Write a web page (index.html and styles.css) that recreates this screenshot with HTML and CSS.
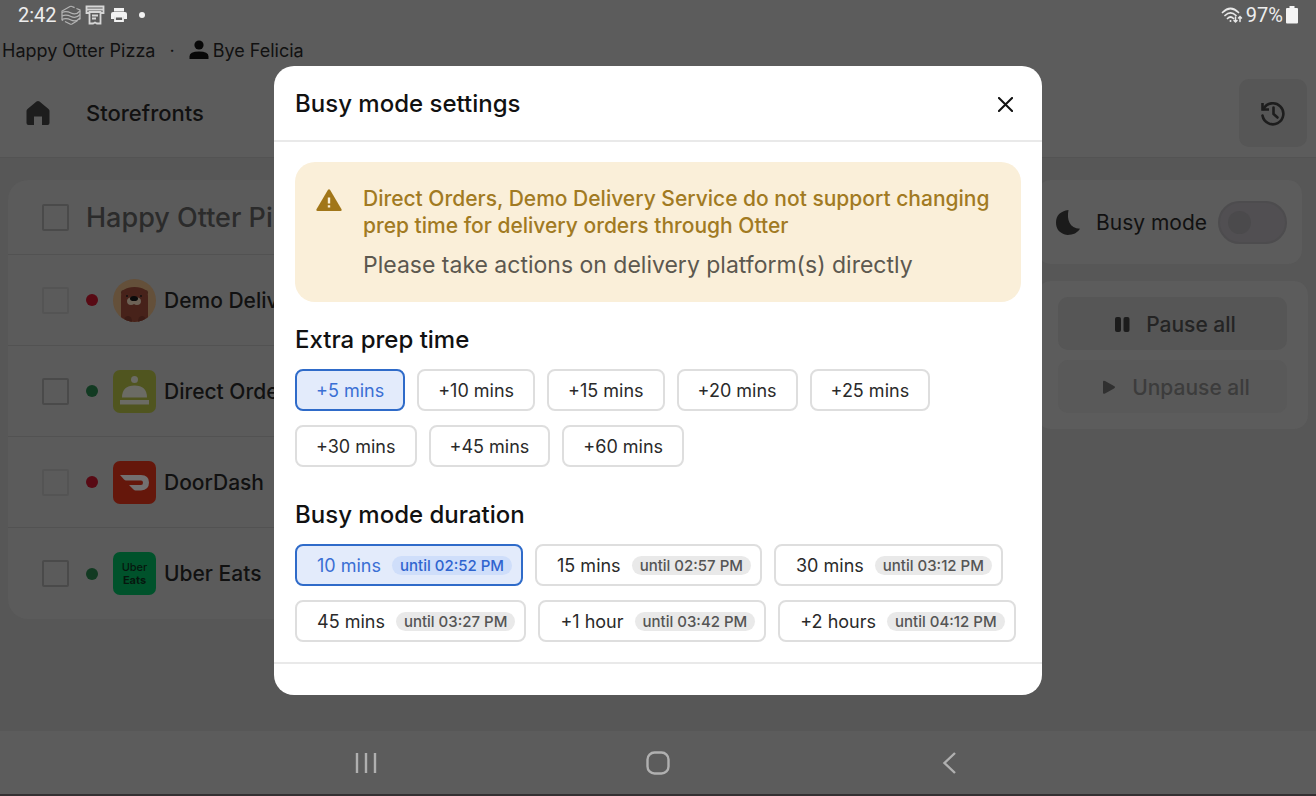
FILE: index.html
```html
<!DOCTYPE html>
<html lang="en">
<head>
<meta charset="utf-8">
<meta name="viewport" content="width=device-width, initial-scale=1">
<title>Storefronts</title>
<link rel="stylesheet" href="styles.css">
</head>
<body>
<div class="device">
  <div class="status-bar">
    <div class="status-group">
      <span class="clock">2:42</span>
      <svg class="status-icon" viewBox="0 0 20 20" fill="none" stroke="#b4b4b4" stroke-width="1.2"><path d="M1 6 9 1.500q1-.5 2 0L19 5v9l-8 5q-1 .5-2 0L1 15z" stroke-dasharray="14 2"/><path d="M1 7.500q4-2 9 .5t9-2M1 11q4-2 9 .5t9-2M1 14.500q4-2 9 .5t9-2"/></svg>
      <svg class="status-icon" viewBox="0 0 20 20" fill="none" stroke="#d6d6d6" stroke-width="1.800"><path d="M4 8H1.500V1.500h17V8H16M1.500 4.500h17"/><path d="M4.500 7h11v11.500H12l-2-1-2 1H4.500zM7 10.500h6M7 13.500h4"/></svg>
      <svg class="status-icon" viewBox="0 0 20 20"><path fill="#f2f2f2" d="M5 3h10v3.500H5zM4 7h12q2 0 2 2v5h-3v-2.500H5V14H2V9q0-2 2-2z"/><path fill="none" stroke="#f2f2f2" stroke-width="1.800" d="M6 11.500h8V16H6z"/></svg>
      <span class="notice-dot"></span>
    </div>
    <div class="status-group status-right">
      <svg class="wifi-icon" viewBox="0 0 22 18" fill="none" stroke="#e8e8e8" stroke-width="1.700" stroke-linecap="round"><path d="M1.500 6.500q8-8 16 0M4 9.500q5.500-5.500 11 0M6.500 12.500q3-3 6 0"/><path d="M14.500 11v5m-1.500-1.500 1.500 1.500 1.500-1.500M19 15.500v-5M17.500 12 19 10.500 20.500 12" stroke-width="1.500"/><circle cx="9.500" cy="15" r="1" fill="#e8e8e8" stroke="none"/></svg>
      <span>97%</span>
      <svg class="battery-icon" viewBox="0 0 12 18"><path fill="#f4f4f4" d="M3.500 0h5v2H11q1 0 1 1v13.500q0 1-1 1H1q-1 0-1-1V3q0-1 1-1h2.500z"/></svg>
    </div>
  </div>

  <div class="account-bar">
    <span>Happy Otter Pizza</span>
    <span class="separator">·</span>
    <span class="user"><svg class="user-icon" viewBox="0 0 20 20"><circle cx="10" cy="5" r="4.600"/><path d="M.5 19v-2.500Q.5 11.500 10 11.500t9.500 5V19z"/></svg>Bye Felicia</span>
  </div>

  <header class="top-nav">
    <a class="home" href="#" aria-label="Home"><svg viewBox="0 0 24 26"><path d="M10.500 1.500q1.500-1.200 3 0l9 7.500q1 .9 1 2v12q0 2-2 2h-5.500v-8.500h-8V25H2.500q-2 0-2-2V11q0-1.100 1-2z"/></svg></a>
    <span class="nav-title">Storefronts</span>
    <button class="history" type="button" aria-label="History"><svg viewBox="0 0 26 26" fill="none" stroke="#1d1d1d" stroke-width="2.600"><path d="M2.500 3v6.500H9"/><path d="M3.500 9a10.500 10.500 0 1 1-1 6.500" stroke-linecap="round"/><path d="M13.500 7.500V14l4 3.500" stroke-linecap="round"/></svg></button>
  </header>

  <main class="content">
    <section class="stores">
      <div class="store-head">
        <input class="check" type="checkbox" aria-label="Happy Otter Pizza">
        <h2>Happy Otter Pizza</h2>
      </div>
      <label class="store">
        <input class="check faded" type="checkbox" disabled>
        <span class="dot offline"></span>
        <svg class="logo" viewBox="0 0 43 43"><defs><clipPath id="badge"><circle cx="21.500" cy="21.500" r="21.500"/></clipPath></defs><g clip-path="url(#badge)"><path fill="#64503a" d="M0 0h43v43H0z"/><circle cx="10.500" cy="13.500" r="2.500" fill="#43251c"/><circle cx="32.500" cy="13.500" r="2.500" fill="#43251c"/><path fill="#47221a" d="M8 43V18Q8 8 21.500 8T35 18v25z"/><path fill="#3b1b15" d="M11 43q0-6 4-6t4 6zM25 43q0-6 4-6t4 6z"/><path fill="#6d6256" d="M14 22q0-4 7-4t7 4q0 4-4 4-2 0-3-1-1 1-3 1-4 0-4-4z"/><ellipse cx="21" cy="19.500" rx="4" ry="2.600" fill="#0a0a0a"/><circle cx="14" cy="17" r="1" fill="#111"/><circle cx="28" cy="17" r="1" fill="#111"/></g></svg>
        <span>Demo Delivery Service</span>
      </label>
      <label class="store">
        <input class="check" type="checkbox">
        <span class="dot online"></span>
        <svg class="logo" viewBox="0 0 43 43"><rect width="43" height="43" rx="7" fill="#50551f"/><circle cx="21.500" cy="9.500" r="3.500" fill="#6b6b64"/><path fill="#6b6b64" d="M9 27.500q0-12 12.500-12T34 27.500zM7 30h29v4.500H7z"/></svg>
        <span>Direct Orders</span>
      </label>
      <label class="store">
        <input class="check faded" type="checkbox" disabled>
        <span class="dot offline"></span>
        <svg class="logo" viewBox="0 0 43 43"><rect width="43" height="43" rx="7" fill="#65170b"/><path fill="#737070" d="M7 14h21q8 0 8 7.500T28 29.500h-5.500q-1 0-2-1L16 24h12q2 0 2-2.200T28 19.500H13q-1 0-2-1z"/></svg>
        <span>DoorDash</span>
      </label>
      <label class="store">
        <input class="check" type="checkbox">
        <span class="dot online"></span>
        <span class="logo uber">Uber<b>Eats</b></span>
        <span>Uber Eats</span>
      </label>
    </section>

    <aside class="side">
      <div class="busy-card">
        <svg class="moon" viewBox="0 0 26 28"><path d="M13 1Q0 3 0 14t12 13q9 0 13-6.500C14 20 11 11 13 1z"/></svg>
        <label for="busy">Busy mode</label>
        <input class="toggle" id="busy" type="checkbox" role="switch">
      </div>
      <div class="actions-card">
        <button class="action" type="button"><svg class="pause-icon" viewBox="0 0 15 15"><rect width="6" height="15" rx="2"/><rect x="8.500" width="6" height="15" rx="2"/></svg>Pause all</button>
        <button class="action muted" type="button" disabled><svg class="pause-icon" viewBox="0 0 15 15"><path d="M2 2q0-2 2-1l9 5q2 1 0 2.500l-9 5q-2 1-2-1z"/></svg>Unpause all</button>
      </div>
    </aside>
  </main>

  <nav class="system-nav">
    <button type="button" aria-label="Recents"><svg viewBox="0 0 24 24"><path d="M3 2v20M12 2v20M21 2v20"/></svg></button>
    <button type="button" aria-label="Home"><svg viewBox="0 0 24 24"><rect x="1.500" y="1.500" width="21" height="21" rx="7"/></svg></button>
    <button type="button" aria-label="Back"><svg viewBox="0 0 24 24"><path d="M17 2 6.500 12 17 22"/></svg></button>
  </nav>
</div>

<div class="overlay">
  <div class="modal" role="dialog" aria-labelledby="modal-title">
    <div class="modal-head">
      <h1 id="modal-title">Busy mode settings</h1>
      <button class="close" type="button" aria-label="Close"><svg viewBox="0 0 16 16"><path d="M1 1l14 14M15 1 1 15"/></svg></button>
    </div>
    <div class="modal-body">
      <div class="alert">
        <svg class="warning" viewBox="0 0 26 22"><path fill="#a17619" d="M12 .8q1-1.300 2 0l11.500 19.500q.6 1.700-1 1.700h-23q-1.600 0-1-1.700z"/><path stroke="#faefd9" stroke-width="2.400" d="M13 8.500v6M13 16.200v2.400"/></svg>
        <div>
          <p class="alert-title">Direct Orders, Demo Delivery Service do not support changing prep time for delivery orders through Otter</p>
          <p class="alert-text">Please take actions on delivery platform(s) directly</p>
        </div>
      </div>

      <fieldset>
        <legend>Extra prep time</legend>
        <div class="chips">
          <label class="chip"><input type="radio" name="prep" checked>+5 mins</label>
          <label class="chip"><input type="radio" name="prep">+10 mins</label>
          <label class="chip"><input type="radio" name="prep">+15 mins</label>
          <label class="chip"><input type="radio" name="prep">+20 mins</label>
          <label class="chip"><input type="radio" name="prep">+25 mins</label>
          <label class="chip"><input type="radio" name="prep">+30 mins</label>
          <label class="chip"><input type="radio" name="prep">+45 mins</label>
          <label class="chip"><input type="radio" name="prep">+60 mins</label>
        </div>
      </fieldset>

      <fieldset>
        <legend>Busy mode duration</legend>
        <div class="chips">
          <label class="chip timed"><input type="radio" name="duration" checked>10 mins <span class="until">until 02:52 PM</span></label>
          <label class="chip timed"><input type="radio" name="duration">15 mins <span class="until">until 02:57 PM</span></label>
          <label class="chip timed"><input type="radio" name="duration">30 mins <span class="until">until 03:12 PM</span></label>
          <label class="chip timed"><input type="radio" name="duration">45 mins <span class="until">until 03:27 PM</span></label>
          <label class="chip timed"><input type="radio" name="duration">+1 hour <span class="until">until 03:42 PM</span></label>
          <label class="chip timed"><input type="radio" name="duration">+2 hours <span class="until">until 04:12 PM</span></label>
        </div>
      </fieldset>
    </div>
    <div class="modal-foot"></div>
  </div>
</div>
</body>
</html>
```
FILE: styles.css
```css
* { box-sizing: border-box; }

body {
  margin: 0;
  background: #575757;
  color: #111;
  font-family: Inter, "Liberation Sans", sans-serif;
}

h1, h2, p { margin: 0; font-weight: 500; }
button { border: 0; padding: 0; background: none; color: inherit; font: inherit; }
svg { display: block; flex: none; }

.device { display: flex; flex-direction: column; min-height: 100vh; }

.status-bar {
  display: flex;
  justify-content: space-between;
  align-items: center;
  height: 30px;
  padding: 0 18px;
  background: #5c5c5c;
  color: #ededed;
  font-family: Roboto, sans-serif;
  font-size: 20px;
}
.status-group { display: flex; align-items: center; gap: 4px; }
.status-right { gap: 3px; }
.status-icon { width: 20px; height: 20px; }
.notice-dot { width: 6px; height: 6px; margin-left: 6px; border-radius: 50%; background: #f2f2f2; }
.wifi-icon { width: 22px; height: 18px; }
.battery-icon { width: 12px; height: 18px; }

.account-bar {
  display: flex;
  align-items: center;
  height: 40px;
  padding: 0 2px;
  background: #5c5c5c;
  font-size: 18px;
}
.separator { padding: 0 14px; }
.user { display: flex; align-items: center; gap: 4px; }
.user-icon { width: 20px; height: 20px; fill: #080808; }

.top-nav {
  display: flex;
  align-items: center;
  height: 88px;
  padding: 0 9px 2px 26px;
  border-bottom: 1px solid #535353;
  background: #5c5c5c;
}
.home svg { width: 24px; height: 26px; fill: #1d1d1d; }
.nav-title { margin-left: 36px; font-size: 22px; font-weight: 500; }
.history {
  display: grid;
  place-items: center;
  width: 68px;
  height: 68px;
  margin-left: auto;
  border-radius: 10px;
  background: #565656;
}
.history svg { width: 26px; height: 26px; }

.content {
  display: flex;
  align-items: flex-start;
  gap: 17px;
  flex: 1;
  padding: 22px 8px;
  background: #575757;
}

.stores { flex: 1; border-radius: 20px; background: #5b5b5b; }
.store-head, .store { display: flex; align-items: center; padding: 0 34px; border-bottom: 1px solid #525252; }
.store-head { height: 75px; gap: 17px; }
.store-head h2 { color: #2b2b2b; font-size: 27px; }
.store { height: 91px; font-size: 21px; font-weight: 500; }
.store:last-child { border: 0; }

.check {
  appearance: none;
  flex: none;
  width: 27px;
  height: 27px;
  margin: 0;
  border: 2px solid #4a4a4a;
  border-radius: 2px;
}
.check.faded { border-color: #545454; }
.dot { flex: none; width: 12px; height: 12px; margin: 0 15px 0 17px; border-radius: 50%; }
.offline { background: #580a14; }
.online { background: #123a22; }
.logo { flex: none; width: 43px; height: 43px; margin-right: 8px; }
.uber {
  display: flex;
  flex-direction: column;
  justify-content: center;
  align-items: center;
  border-radius: 7px;
  background: #00522b;
  color: #06170e;
  font-size: 11px;
  line-height: 13px;
}

.side { display: flex; flex-direction: column; gap: 17px; width: 271px; }
.busy-card {
  display: flex;
  align-items: center;
  height: 84px;
  margin-right: 6px;
  padding: 0 15px 0 19px;
  border-radius: 14px;
  background: #5c5c5c;
  font-size: 21px;
}
.moon { width: 25px; height: 27px; margin-right: 15px; fill: #1b1b1b; }
.toggle {
  appearance: none;
  width: 69px;
  height: 43px;
  margin: 0 0 0 auto;
  padding: 8px;
  border: 2px solid #4d4c4e;
  border-radius: 22px;
  background: #514f52;
}
.toggle::before { content: ""; display: block; width: 23px; height: 23px; border-radius: 50%; background: #4b4a4c; }

.actions-card { display: grid; gap: 10px; padding: 16px 21px; border-radius: 14px; background: #5c5c5c; }
.action {
  display: flex;
  justify-content: center;
  align-items: center;
  gap: 16px;
  height: 53px;
  padding: 2px 0 0 6px;
  border-radius: 10px;
  background: #565656;
  color: #242424;
  font-size: 21px;
  font-weight: 500;
}
.action.muted { background: #595959; color: #3c3c3c; }
.pause-icon { width: 15px; height: 15px; fill: #1c1c1c; }
.muted .pause-icon { fill: #303030; }

.system-nav {
  display: flex;
  justify-content: center;
  height: 65px;
  border-bottom: 2px solid #343032;
  background: #5c5c5c;
}
.system-nav button { display: grid; place-items: center; width: 22.2%; }
.system-nav svg { width: 24px; height: 24px; fill: none; stroke: #b0b0b0; stroke-width: 2.4; }

.overlay {
  position: fixed;
  inset: 30px 0 65px;
  display: grid;
  place-items: center;
}
.modal {
  width: 100%;
  max-width: 768px;
  border-radius: 20px;
  background: #fff;
}
.modal-head {
  display: flex;
  justify-content: space-between;
  align-items: center;
  height: 76px;
  padding: 2px 29px 0 21px;
  border-bottom: 2px solid #e9e9e9;
}
h1, legend { font-size: 24px; font-weight: 500; line-height: 30px; }
.close svg { width: 15px; height: 15px; fill: none; stroke: #111; stroke-width: 2.2; stroke-linecap: round; }
.modal-body { padding: 20px 21px; }

.alert {
  display: flex;
  gap: 21px;
  padding: 23px 21px;
  border-radius: 20px;
  background: #faefd9;
}
.warning { width: 26px; height: 22px; margin-top: 4px; }
.alert-title { color: #a17a22; font-size: 21px; line-height: 27px; }
.alert-text { margin-top: 13px; color: #5c584f; font-size: 23px; font-weight: 400; line-height: 27px; }

fieldset { min-width: 0; margin: 23px 0 0; padding: 0; border: 0; }
fieldset + fieldset { margin-top: 33px; }
legend { padding: 0; }
.chips { display: flex; flex-wrap: wrap; gap: 14px 12px; margin-top: 14px; }
.chip {
  position: relative;
  display: flex;
  align-items: center;
  height: 42px;
  padding: 0 19px;
  border: 2px solid #dedede;
  border-radius: 8px;
  color: #2a2a2a;
  font-size: 18px;
  white-space: nowrap;
}
.chip input { position: absolute; inset: 0; margin: 0; opacity: 0; }
.chip.timed { gap: 11px; padding: 0 9px 0 20px; }
.until {
  padding: 0 8px;
  border-radius: 10px;
  background: #e9e9e9;
  color: #555;
  font-size: 15px;
  font-weight: 500;
  line-height: 19px;
}
.chip:has(input:checked) { border-color: #2f6bc9; background: #e3ebfb; color: #3a6fd4; }
.chip:has(input:checked) .until { background: #cfdefa; color: #2f64cf; }

.modal-foot { height: 33px; border-top: 2px solid #e9e9e9; }
```
